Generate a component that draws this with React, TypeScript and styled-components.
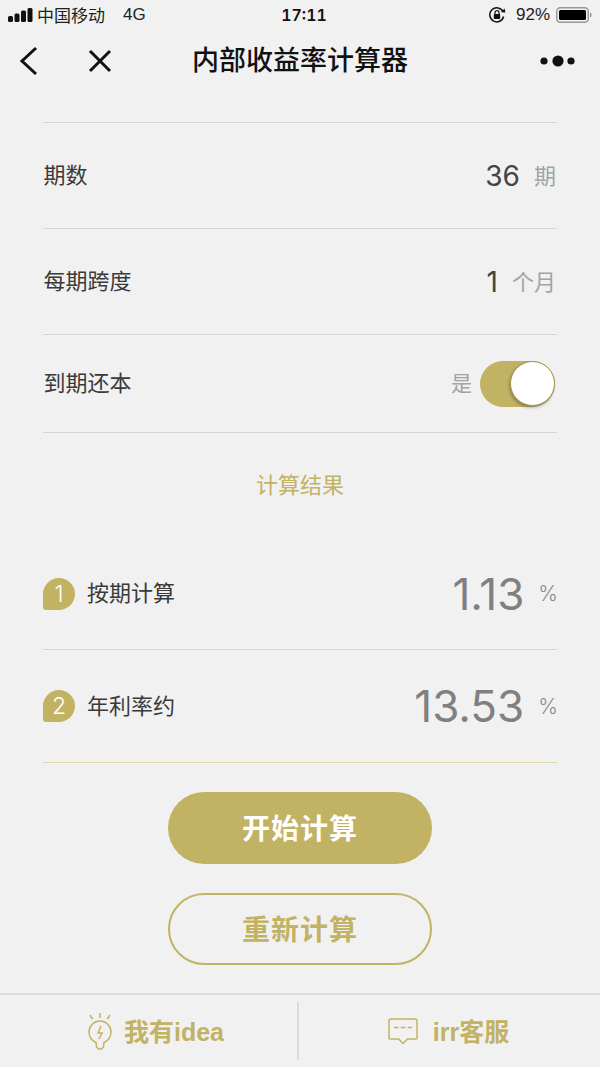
import React from "react";
import styled, { createGlobalStyle } from "styled-components";

const GOLD = "#c2b264";
const FONT = `"Liberation Sans", "Noto Sans CJK SC", sans-serif`;
const NUM_FONT = `Inter, "Liberation Sans", sans-serif`;

const GlobalStyle = createGlobalStyle`
  html, body { margin: 0; padding: 0; background: #f1f1f1; }
  body { font-family: ${FONT}; }
`;

const Page = styled.div`
  width: 600px;
  height: 1067px;
  overflow: hidden;
  display: flex;
  flex-direction: column;
  background: #f1f1f1;
  color: #333;
`;

const StatusBar = styled.div`
  height: 30px;
  padding: 0 8px 0 8px;
  display: grid;
  grid-template-columns: 1fr auto 1fr;
  align-items: center;
  font-size: 17px;
  color: #222;
`;

const StatusLeft = styled.div`
  display: flex;
  align-items: center;
  gap: 4px;
`;

const StatusRight = styled.div`
  display: flex;
  align-items: center;
  justify-content: flex-end;
  gap: 6px;
`;

const LockSlot = styled.span`
  display: flex;
  margin-right: 4px;
`;

const Clock = styled.div`
  margin-left: 8px;
  font-family: ${NUM_FONT};
  font-weight: 600;
  font-size: 16px;
  font-variant-numeric: tabular-nums;
  color: #111;
`;

const Carrier = styled.span`
  margin-right: 14px;
  padding-bottom: 2px;
`;

const NavBar = styled.div`
  height: 62px;
  padding: 0 24px 0 18px;
  display: flex;
  align-items: center;
  justify-content: space-between;
  position: relative;
`;

const NavButtons = styled.div`
  display: flex;
  align-items: center;
  gap: 48px;
`;

const NavTitle = styled.div`
  position: absolute;
  left: 0;
  right: 0;
  padding-bottom: 5px;
  text-align: center;
  font-size: 27px;
  font-weight: 500;
  color: #111;
`;

const Content = styled.div`
  flex: 1;
  padding: 30px 43px 0;
  display: flex;
  flex-direction: column;
`;

const Row = styled.div<{ $h: number }>`
  height: ${(p) => p.$h}px;
  box-sizing: border-box;
  border-top: 1px solid #d6d6d6;
  display: flex;
  align-items: center;
  justify-content: space-between;
`;

const Label = styled.div`
  padding: 0 0 5px 0.5px;
  font-size: 22px;
  color: #3a3a3a;
`;

const ValueGroup = styled.div`
  display: flex;
  align-items: center;
  gap: 14px;
  margin-right: 1px;
`;

const Value = styled.span`
  font-family: ${NUM_FONT};
  font-weight: 400;
  font-size: 28px;
  color: #444;
`;

const Unit = styled.span<{ $size?: number }>`
  padding-bottom: 4px;
  font-size: ${(p) => p.$size ?? 22}px;
  color: #a3a3a3;
`;

const SwitchWrap = styled.div`
  display: flex;
  align-items: center;
  gap: 8px;
  margin-right: 2px;
`;

const Track = styled.div`
  width: 75px;
  height: 46px;
  border-radius: 23px;
  background: ${GOLD};
  display: flex;
  align-items: center;
  justify-content: flex-end;
`;

const Knob = styled.div`
  width: 45px;
  height: 45px;
  box-sizing: border-box;
  border-radius: 50%;
  background: #fff;
  border: 1px solid #a39450;
  box-shadow: -1px 2px 3px rgba(0, 0, 0, 0.25);
`;

const SectionTitle = styled.div`
  border-top: 1px solid #d6d6d6;
  height: 106px;
  box-sizing: border-box;
  padding-top: 39px;
  line-height: 28px;
  text-align: center;
  font-size: 22px;
  color: ${GOLD};
`;

const ResultRow = styled.div<{ $h: number; $gold?: boolean }>`
  height: ${(p) => p.$h}px;
  box-sizing: border-box;
  border-bottom: 1px solid ${(p) => (p.$gold ? "#e0d8ac" : "#d6d6d6")};
  display: flex;
  align-items: center;
  justify-content: space-between;
`;

const ResultLabel = styled.div`
  display: flex;
  align-items: center;
  gap: 11.5px;
`;

const Badge = styled.div`
  width: 32px;
  height: 32px;
  border-radius: 50% 50% 50% 3px;
  background: ${GOLD};
  color: #fff;
  font-family: ${NUM_FONT};
  font-weight: 300;
  font-size: 23px;
  display: flex;
  align-items: center;
  justify-content: center;
`;

const ResultValue = styled.div`
  display: flex;
  align-items: center;
  gap: 14px;
  margin-right: -1px;
`;

const BigNumber = styled.span`
  font-family: ${NUM_FONT};
  font-weight: 400;
  font-size: 44px;
  color: #808080;
`;

const Percent = styled.span`
  font-family: ${NUM_FONT};
  font-weight: 300;
  font-size: 21px;
  color: #8c8c8c;
`;

const Actions = styled.div`
  display: flex;
  flex-direction: column;
  align-items: center;
  gap: 29px;
  margin-top: 29px;
`;

const Action = styled.button<{ $outline?: boolean }>`
  width: 264px;
  height: 72px;
  box-sizing: border-box;
  border-radius: 36px;
  border: ${(p) => (p.$outline ? `2px solid ${GOLD}` : "none")};
  background: ${(p) => (p.$outline ? "transparent" : GOLD)};
  color: ${(p) => (p.$outline ? GOLD : "#fff")};
  font-family: ${FONT};
  font-size: 28px;
  font-weight: 700;
  letter-spacing: 1px;
  padding: 0 0 3px;
`;

const Footer = styled.div`
  height: 74px;
  box-sizing: border-box;
  border-top: 2px solid #dcdcdc;
  display: grid;
  grid-template-columns: 297px 1fr;
  align-items: center;
`;

const FooterItem = styled.div<{ $divider?: boolean }>`
  height: 58px;
  box-sizing: border-box;
  border-left: ${(p) => (p.$divider ? "2px solid #dcdcdc" : "none")};
  padding: ${(p) => (p.$divider ? "0 2px 0 0" : "0 0 0 15px")};
  display: flex;
  align-items: center;
  justify-content: center;
  gap: ${(p) => (p.$divider ? 15 : 12)}px;
  color: ${GOLD};
  font-size: 25px;
  font-weight: 700;
`;

const FooterText = styled.span`
  padding-bottom: 3px;
`;

const Signal = () => (
  <svg width="25" height="16" viewBox="0 0 25 16" fill="#111">
    <rect x="0" y="9" width="5" height="6" rx="1.5" />
    <rect x="6.500" y="6.500" width="5" height="8.500" rx="1.5" />
    <rect x="13" y="3.500" width="5" height="11.500" rx="1.5" />
    <rect x="19.500" y="1" width="5" height="14" rx="1.500" />
  </svg>
);

const RotationLock = () => (
  <svg width="18" height="18" viewBox="0 0 18 18" fill="none">
    <path d="M15.600 10.500A7 7 0 1 1 15 5.600" stroke="#111" strokeWidth="1.500" />
    <path d="M13 6.200 L17.400 6.400 L16.600 2.600 Z" fill="#111" />
    <rect x="5.800" y="8" width="6.400" height="5" rx="0.800" fill="#111" />
    <path d="M7 8V6.600a2 2 0 0 1 4 0V8" stroke="#111" strokeWidth="1.200" />
  </svg>
);

const Battery = () => (
  <svg width="36" height="16" viewBox="0 0 36 16" fill="none">
    <rect x="0.750" y="0.750" width="31.500" height="14.500" rx="3.500" stroke="#999" strokeWidth="1.500" />
    <rect x="3" y="3" width="27" height="10" rx="1.500" fill="#000" />
    <path d="M34 5.500c1.200.4 1.600 1.300 1.600 2.500s-.4 2.100-1.600 2.500z" fill="#999" />
  </svg>
);

const BackIcon = () => (
  <svg width="22" height="30" viewBox="0 0 22 30" fill="none">
    <path d="M18 2 L4 15 L18 28" stroke="#111" strokeWidth="3" />
  </svg>
);

const CloseIcon = () => (
  <svg width="24" height="24" viewBox="0 0 24 24" fill="none">
    <path d="M2 2 L22 22 M22 2 L2 22" stroke="#111" strokeWidth="3" />
  </svg>
);

const MoreIcon = () => (
  <svg width="36" height="12" viewBox="0 0 36 12" fill="#111">
    <circle cx="4" cy="6" r="3.600" />
    <circle cx="18" cy="6" r="5.600" />
    <circle cx="31" cy="6" r="3.600" />
  </svg>
);

const BulbIcon = () => (
  <svg width="24" height="37" viewBox="0 0 24 37" fill="none" stroke={GOLD} strokeWidth="1.500">
    <path d="M12 0V5 M2 2L4.600 6 M22 2L19.400 6" />
    <path d="M8 29.500C4 27.500 1 23.800 1 19a11 11 0 0 1 22 0c0 4.800-3 8.500-7 10.500l-.5 4.500-2 2h-3l-2-2z" />
    <path d="M13 13L10 20H14L11 26" />
  </svg>
);

const ChatIcon = () => (
  <svg width="30" height="27" viewBox="0 0 30 27" fill="none" stroke={GOLD} strokeWidth="1.500">
    <path d="M3 1h24a2 2 0 0 1 2 2v17a1 1 0 0 1-1 1H19.500L15 25.500 10.500 21H2a1 1 0 0 1-1-1V3a2 2 0 0 1 2-2z" />
    <path d="M6 9.500h4.500 M12.800 9.500h4.500 M19.600 9.500h4.500" />
  </svg>
);

export default function App() {
  return (
    <Page>
      <GlobalStyle />
      <StatusBar>
        <StatusLeft>
          <Signal />
          <Carrier>中国移动</Carrier>
          <span>4G</span>
        </StatusLeft>
        <Clock>17:11</Clock>
        <StatusRight>
          <LockSlot>
            <RotationLock />
          </LockSlot>
          <span>92%</span>
          <Battery />
        </StatusRight>
      </StatusBar>

      <NavBar>
        <NavButtons>
          <BackIcon />
          <CloseIcon />
        </NavButtons>
        <NavTitle>内部收益率计算器</NavTitle>
        <MoreIcon />
      </NavBar>

      <Content>
        <Row $h={106}>
          <Label>期数</Label>
          <ValueGroup>
            <Value>36</Value>
            <Unit>期</Unit>
          </ValueGroup>
        </Row>
        <Row $h={106}>
          <Label>每期跨度</Label>
          <ValueGroup>
            <Value>1</Value>
            <Unit>个月</Unit>
          </ValueGroup>
        </Row>
        <Row $h={98}>
          <Label>到期还本</Label>
          <SwitchWrap>
            <Unit $size={21}>是</Unit>
            <Track>
              <Knob />
            </Track>
          </SwitchWrap>
        </Row>

        <SectionTitle>计算结果</SectionTitle>

        <ResultRow $h={112}>
          <ResultLabel>
            <Badge>1</Badge>
            <Label>按期计算</Label>
          </ResultLabel>
          <ResultValue>
            <BigNumber>1.13</BigNumber>
            <Percent>%</Percent>
          </ResultValue>
        </ResultRow>
        <ResultRow $h={113} $gold>
          <ResultLabel>
            <Badge>2</Badge>
            <Label>年利率约</Label>
          </ResultLabel>
          <ResultValue>
            <BigNumber>13.53</BigNumber>
            <Percent>%</Percent>
          </ResultValue>
        </ResultRow>

        <Actions>
          <Action>开始计算</Action>
          <Action $outline>重新计算</Action>
        </Actions>
      </Content>

      <Footer>
        <FooterItem>
          <BulbIcon />
          <FooterText>我有idea</FooterText>
        </FooterItem>
        <FooterItem $divider>
          <ChatIcon />
          <FooterText>irr客服</FooterText>
        </FooterItem>
      </Footer>
    </Page>
  );
}
